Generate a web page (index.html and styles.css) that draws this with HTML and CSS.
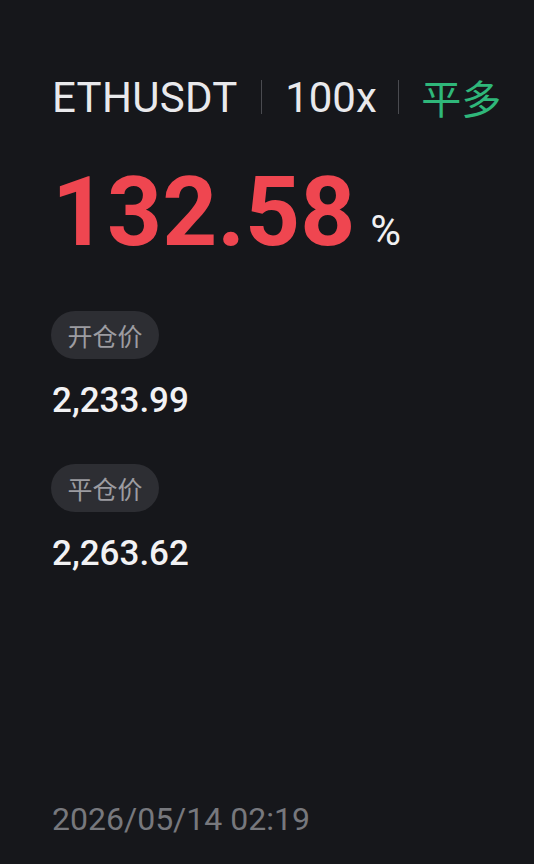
FILE: index.html
```html
<!DOCTYPE html>
<html>
<head>
<meta charset="utf-8">
<link rel="stylesheet" href="styles.css">
</head>
<body>
<div class="card">
  <div class="header">
    <span class="symbol">ETHUSDT</span>
    <span class="sep"></span>
    <span class="lev">100x</span>
    <span class="sep"></span>
    <span class="side">平多</span>
  </div>
  <div class="pnl">
    <span class="pnl-num">132.58</span>
    <span class="pnl-pct">%</span>
  </div>
  <div class="field">
    <span class="pill">开仓价</span>
    <div class="value">2,233.99</div>
  </div>
  <div class="field">
    <span class="pill">平仓价</span>
    <div class="value">2,263.62</div>
  </div>
  <div class="time">2026/05/14 02:19</div>
</div>
</body>
</html>
```
FILE: styles.css
```css
html, body {
  margin: 0;
  padding: 0;
  background: #16171b;
}
body {
  width: 534px;
  height: 864px;
  overflow: hidden;
  font-family: Roboto, "Noto Sans CJK SC", sans-serif;
  color: #f2f2f4;
}
.card {
  height: 864px;
  padding: 0 0 0 52px;
  box-sizing: border-box;
  display: flex;
  flex-direction: column;
}
.header {
  display: flex;
  align-items: center;
  margin-top: 73px;
  height: 48px;
}
.symbol, .lev {
  font-size: 42px;
  font-weight: 400;
  color: #e9e9ec;
}
.symbol {
  letter-spacing: 0.3px;
}
.sep {
  width: 1.5px;
  height: 34px;
  background: #4a4b50;
  margin: 0 23px;
}
.lev + .sep {
  margin-left: 21px;
  margin-right: 22px;
}
.side {
  font-size: 40px;
  color: #2fb77a;
  font-family: "Noto Sans CJK SC", sans-serif;
}
.pnl {
  display: flex;
  align-items: baseline;
  margin-top: 35px;
  height: 112px;
}
.pnl-num {
  font-size: 96px;
  font-weight: 700;
  color: #ef4650;
  line-height: 112px;
}
.pnl-pct {
  font-size: 42px;
  color: #f0f0f2;
  margin-left: 15px;
}
.field {
  display: flex;
  flex-direction: column;
  align-items: flex-start;
  margin-top: 43px;
}
.pill {
  display: inline-flex;
  align-items: center;
  justify-content: center;
  height: 48px;
  width: 108px;
  border-radius: 24px;
  background: #2d2e33;
  color: #9c9ca1;
  font-size: 25px;
  font-family: "Noto Sans CJK SC", sans-serif;
  margin-left: -1px;
}
.value {
  font-size: 35px;
  font-weight: 500;
  color: #f2f2f4;
  margin-top: 22px;
  line-height: 40px;
}
.time {
  margin-top: auto;
  margin-bottom: 26px;
  font-size: 32px;
  color: #77787d;
}
```
